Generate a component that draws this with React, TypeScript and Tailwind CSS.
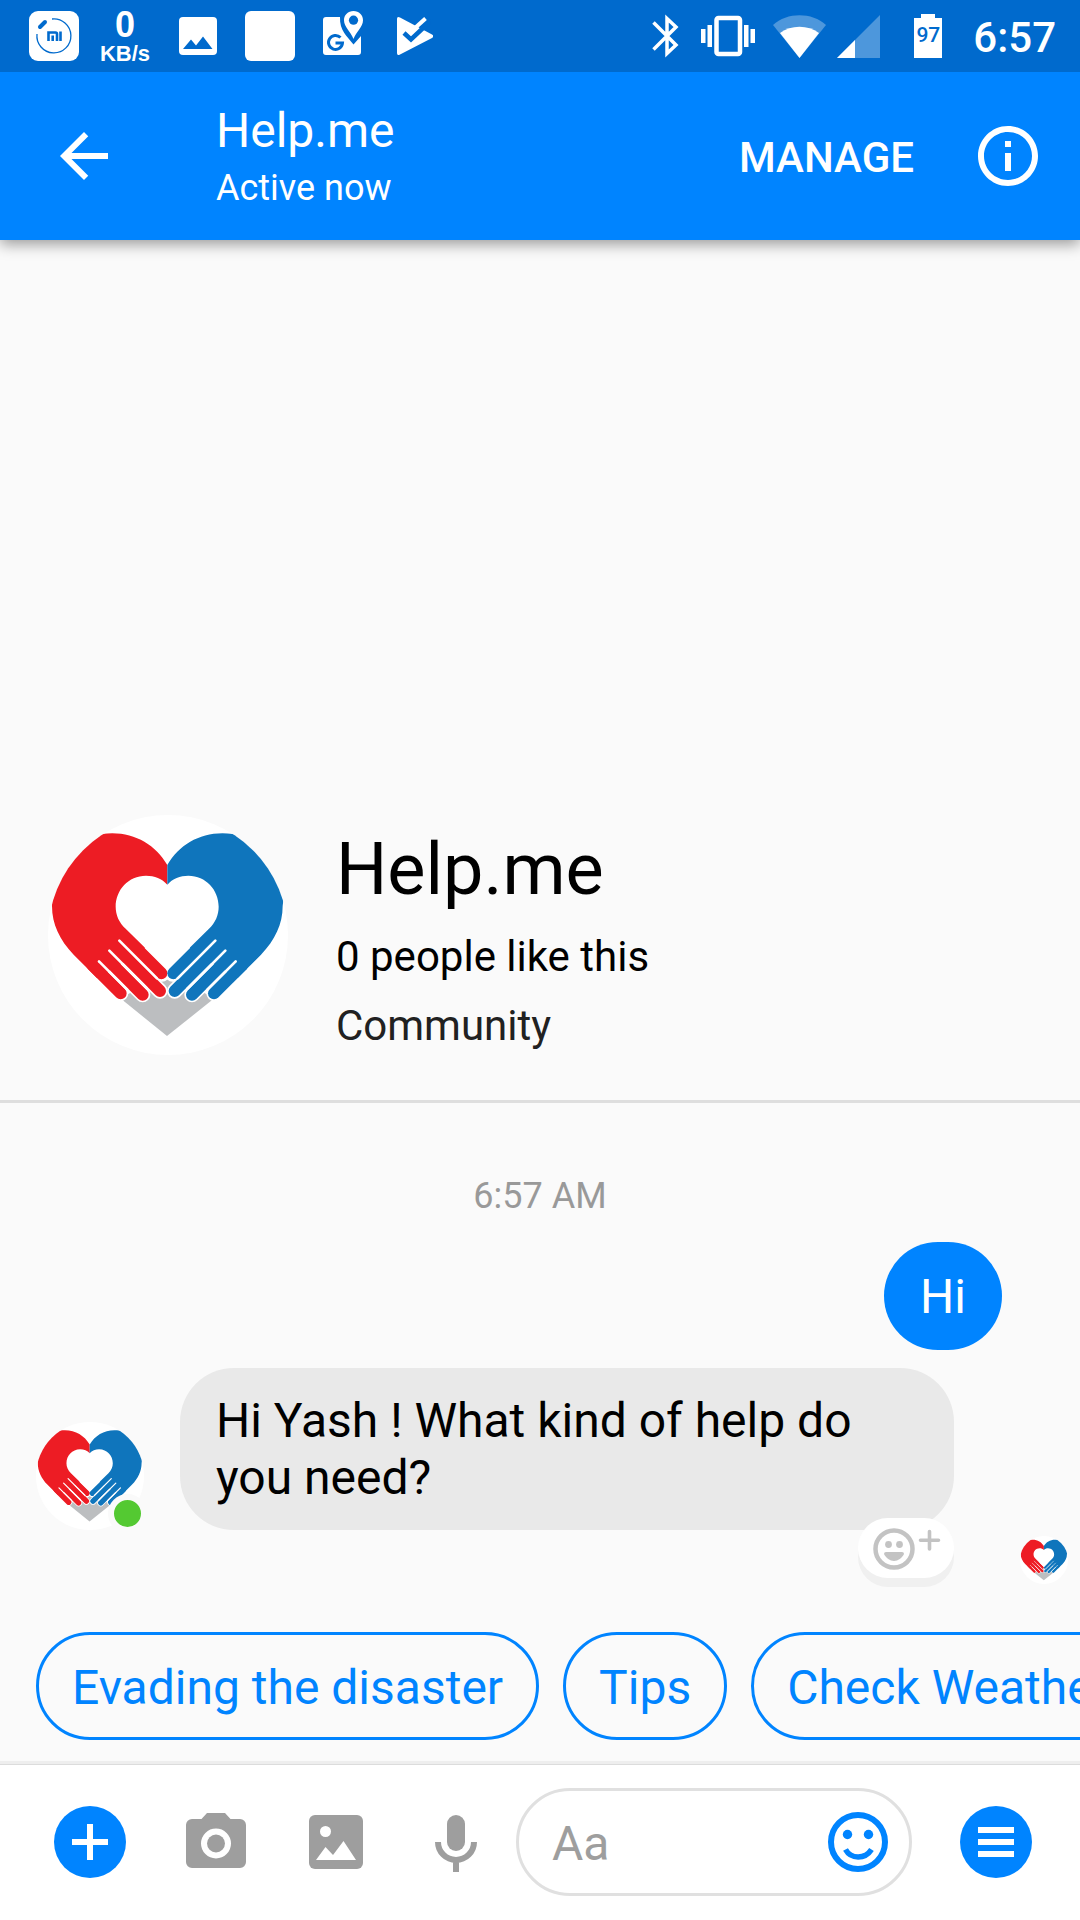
import type { ReactNode } from "react";

function HandOutline() {
  return (
    <g fill="none" stroke="#fff" strokeLinecap="round" strokeWidth="46">
      <path d="M186 495L271 580" />
      <path d="M254 501L337 584" />
      <path d="M290 474L389 573" />
      <path d="M300 427L395 522" />
    </g>
  );
}

function Hand() {
  return (
    <g fill="none" strokeLinecap="round">
      <g stroke="currentColor" strokeWidth="36">
        <path d="M186 495L271 580" />
        <path d="M254 501L337 584" />
        <path d="M290 474L389 573" />
        <path d="M300 427L393 520" />
      </g>
      <path
        fill="currentColor"
        d="M411 195C372 128 300 90 215 102L40 102L65 318C65 372 88 420 130 464L200 534L260 500L340 450L411 300Z"
      />
      <g stroke="#fff" strokeWidth="8">
        <path d="M206 484L290 568" />
        <path d="M237 452L350 565" />
        <path d="M267 422L380 535" />
      </g>
    </g>
  );
}

const mirror = "translate(822 0) scale(-1 1)";

function Logo() {
  return (
    <svg viewBox="53 45 720 720" className="block size-full" aria-hidden="true">
      <path d="M270 595L410 708L552 595L430 530L390 530Z" fill="#bcbec0" />
      <HandOutline />
      <g transform={mirror}>
        <HandOutline />
      </g>
      <g className="text-[#ed1c24]">
        <Hand />
      </g>
      <g className="text-[#0f75bc]" transform={mirror}>
        <Hand />
      </g>
      <path
        d="M411 254C396 236 372 227 347 227C294 227 256 270 256 320C256 345 266 368 286 386L411 509L536 386C555 368 565 345 565 320C565 270 527 227 474 227C450 227 426 236 411 254Z"
        fill="#fff"
      />
    </svg>
  );
}

function StatusBar() {
  return (
    <div className="relative z-10 flex h-[72px] items-center bg-[#006acd] pr-6 pl-[29px] text-white">
      <svg width="50" height="50" viewBox="0 0 50 50" aria-hidden="true">
        <rect width="50" height="50" rx="9" fill="#fff" />
        <g fill="none" stroke="#006acd">
          <path d="M23 8A17 17 0 1 1 8 23" strokeWidth="1.3" />
          <path d="M11 16L16 11" strokeWidth="4" strokeLinecap="round" />
          <path d="M19.500 30V21.500H26.500Q28 21.500 28 23V30M23.700 24.500V30M31.500 20.500V30" strokeWidth="2.600" />
        </g>
      </svg>
      <div className="ml-[18px] flex w-14 flex-col items-center font-['Liberation_Sans',sans-serif] font-bold">
        <span className="text-[36px] leading-[36px]">0</span>
        <span className="text-[22px] leading-[22px]">KB/s</span>
      </div>
      <svg className="ml-[26px]" width="38" height="38" viewBox="0 0 38 38" aria-hidden="true">
        <rect width="38" height="38" rx="4" fill="#fff" />
        <path d="M4 32L12 22.500L17 28.500L24 19.500L33.500 32Z" fill="#006acd" />
      </svg>
      <div className="ml-7 size-[50px] rounded-[6px] bg-white" />
      <svg className="ml-7" width="40" height="50" viewBox="0 0 40 50" aria-hidden="true">
        <path d="M4 6H17C16.500 20 24 25 30.500 33.500L38 25V41a3 3 0 0 1-3 3H3a3 3 0 0 1-3-3V9a3 3 0 0 1 3-3Z" fill="#fff" />
        <path d="M30.500 0C25 0 21 4 21 9.200C21 16 28 21 30.500 28C33 21 40 16 40 9.200C40 4 36 0 30.500 0Z" fill="#fff" />
        <circle cx="30.500" cy="9.200" r="4.600" fill="#006acd" />
        <path d="M17.500 26.500A7 7 0 1 0 19.500 32H12.500" fill="none" stroke="#006acd" strokeWidth="3" />
      </svg>
      <svg className="ml-[34px]" width="36" height="38" viewBox="0 0 36 38" aria-hidden="true">
        <path d="M0 2Q0-1 3 .500L35 17.500Q37.500 19 35 21L3 37.500Q0 39 0 36Z" fill="#fff" />
        <path d="M19 9L29 0L36 3L27 12Z" fill="#006acd" />
        <path d="M7 16L14 22.500L33 4.500" fill="none" stroke="#006acd" strokeWidth="4.500" />
        <path d="M13 15.500L28.500 1.500" stroke="#fff" strokeWidth="4" />
      </svg>

      <svg className="ml-auto" width="27" height="44" viewBox="0 0 27 44" fill="none" stroke="#fff" strokeWidth="3.500" aria-hidden="true">
        <path d="M1.500 8.500L24 31L15 39.500V4.500L24 13L1.500 35.500" />
      </svg>
      <svg className="ml-[22px]" width="54" height="42" viewBox="0 0 54 42" fill="#fff" aria-hidden="true">
        <rect x="15.500" y="3" width="23.500" height="36" rx="2" fill="none" stroke="#fff" strokeWidth="4.500" />
        <path d="M0 14H4.500V28H0ZM6.500 10H11V32H6.500ZM43 10H47.500V32H43ZM49.500 14H54V28H49.500Z" />
      </svg>
      <svg className="ml-[18px]" width="53" height="43" viewBox="0 0 53 43" fill="#fff" aria-hidden="true">
        <path d="M26.500 43L0 10C14-3 39-3 53 10Z" opacity=".3" />
        <path d="M26.500 43L7 18C18 9.500 35 9.500 46 18Z" />
      </svg>
      <svg className="ml-[11px]" width="43" height="43" viewBox="0 0 43 43" fill="#fff" aria-hidden="true">
        <path d="M0 43L43 0V43Z" opacity=".3" />
        <path d="M0 43L18 25V43Z" />
      </svg>
      <div className="relative ml-[34px] h-[44px] w-7">
        <svg className="block" width="28" height="44" viewBox="0 0 28 44" fill="#fff" aria-hidden="true">
          <path d="M7 0H21V4H28V44H0V4H7Z" />
        </svg>
        <span className="absolute inset-0 flex items-center justify-center text-[21px] font-medium text-[#006acd]">97</span>
      </div>
      <span className="ml-[31px] pt-[3px] text-[42px] leading-[48px] font-medium">6:57</span>
    </div>
  );
}

function Header() {
  return (
    <header className="relative flex h-[168px] items-center bg-[#0084ff] pr-9 pl-12 text-white shadow-[0_4px_14px_rgba(0,0,0,0.4)]">
      <button type="button" aria-label="Back">
        <svg className="block size-[72px]" viewBox="0 0 24 24" fill="currentColor" aria-hidden="true">
          <path d="M20 11H7.830l5.590-5.590L12 4l-8 8 8 8 1.410-1.410L7.830 13H20v-2z" />
        </svg>
      </button>
      <div className="ml-24 flex-1 pt-1">
        <h1 className="text-[48px] leading-[60px]">Help.me</h1>
        <p className="text-[36px] leading-[54px]">Active now</p>
      </div>
      <button type="button" className="pt-[3px] text-[42px] leading-[48px] font-medium">
        MANAGE
      </button>
      <button type="button" aria-label="Conversation info" className="ml-[58px]">
        <svg className="block size-[72px]" viewBox="0 0 24 24" fill="currentColor" aria-hidden="true">
          <path d="M11 7h2v2h-2zm0 4h2v6h-2zm1-9C6.480 2 2 6.480 2 12s4.480 10 10 10 10-4.480 10-10S17.520 2 12 2zm0 18c-4.410 0-8-3.590-8-8s3.590-8 8-8 8 3.590 8 8-3.590 8-8 8z" />
        </svg>
      </button>
    </header>
  );
}

function Avatar({ className }: { className: string }) {
  return (
    <div className={`shrink-0 overflow-hidden rounded-full bg-white ${className}`}>
      <Logo />
    </div>
  );
}

function Profile() {
  return (
    <section className="flex items-start border-b-[3px] border-[#dedede] pb-10 pl-12">
      <Avatar className="size-60" />
      <div className="ml-12 pt-3">
        <h2 className="text-[72px] leading-[86px] text-black">Help.me</h2>
        <p className="mt-[9px] text-[42px] leading-[69px] text-black">0 people like this</p>
        <p className="text-[42px] leading-[69px] text-[#212121]">Community</p>
      </div>
    </section>
  );
}

function Messages() {
  return (
    <section className="pt-[69px]">
      <p className="text-center text-[36px] leading-[48px] text-[#999]">6:57 AM</p>
      <div className="mt-[22px] flex justify-end pr-[78px]">
        <p className="flex min-h-[108px] items-center rounded-[54px] bg-[#0084ff] px-9 text-[48px] leading-[57px] text-white">Hi</p>
      </div>
      <div className="mt-[18px] flex items-end pr-[126px] pl-9">
        <div className="relative">
          <Avatar className="size-[108px]" />
          <span className="absolute -right-[3px] -bottom-[3px] size-[39px] rounded-full border-[6px] border-[#fafafa] bg-[#54c932]" />
        </div>
        <div className="relative ml-9 flex-1">
          <p className="rounded-[54px] bg-[#e9e9e9] px-9 py-6 text-[48px] leading-[57px] text-black">
            Hi Yash ! What kind of help do you need?
          </p>
          <button
            type="button"
            aria-label="Add reaction"
            className="absolute right-0 -bottom-12 flex h-[60px] w-24 items-center justify-center rounded-full bg-white pt-[2px] pl-[2px] shadow-[0_9px_0_#f0f0f0]"
          >
            <svg width="68" height="42" viewBox="0 0 68 42" fill="#c3c3c3" aria-hidden="true">
              <circle cx="21" cy="21" r="18.500" fill="none" stroke="#c3c3c3" strokeWidth="4.500" />
              <circle cx="15.500" cy="16.500" r="3.400" />
              <circle cx="26.500" cy="16.500" r="3.400" />
              <path d="M13 24H29Q31 24 31 26C29 30 25 33 21 33S13 30 11 26Q11 24 13 24Z" />
              <path d="M56.500 3.500V21M47.500 12.300H65.500" stroke="#c3c3c3" strokeWidth="3.600" strokeLinecap="round" />
            </svg>
          </button>
        </div>
      </div>
      <div className="mt-[6px] flex justify-end pr-3">
        <Avatar className="size-12" />
      </div>
    </section>
  );
}

const replies = ["Evading the disaster", "Tips", "Check Weather"];

function QuickReplies() {
  return (
    <div className="mt-12 flex gap-6 overflow-x-auto pb-[21px] pl-9 [scrollbar-width:none]">
      {replies.map((label) => (
        <button
          key={label}
          type="button"
          className="h-[108px] shrink-0 rounded-full border-[3px] border-[#0084ff] px-[33px] pt-[2px] text-[48px] leading-[57px] whitespace-nowrap text-[#0084ff]"
        >
          {label}
        </button>
      ))}
    </div>
  );
}

function ToolButton({ label, className, children }: { label: string; className: string; children: ReactNode }) {
  return (
    <button type="button" aria-label={label} className={`shrink-0 ${className}`}>
      <svg className="block size-[72px]" viewBox="0 0 72 72" fill="currentColor" aria-hidden="true">
        {children}
      </svg>
    </button>
  );
}

function Composer() {
  return (
    <footer className="border-t-[3px] border-[#eee] bg-white">
      <form
        className="flex items-center border-t border-[#dcdcdc] pt-[23px] pr-12 pb-6 pl-[54px]"
        onSubmit={(event) => event.preventDefault()}
      >
        <ToolButton label="More actions" className="text-[#0084ff]">
          <circle cx="36" cy="36" r="36" />
          <path d="M36 18V54M18 36H54" stroke="#fff" strokeWidth="6" />
        </ToolButton>
        <ToolButton label="Camera" className="ml-[54px] text-[#9e9e9e]">
          <path
            fillRule="evenodd"
            d="M27 7H45L50.500 13H60a6 6 0 0 1 6 6V56a6 6 0 0 1-6 6H12a6 6 0 0 1-6-6V19a6 6 0 0 1 6-6H21.500ZM36 22.500a15 15 0 1 0 0 30a15 15 0 1 0 0-30Z"
          />
          <circle cx="36" cy="37.500" r="9" />
        </ToolButton>
        <ToolButton label="Gallery" className="ml-12 text-[#9e9e9e]">
          <rect x="9" y="9" width="54" height="54" rx="6" />
          <circle cx="25.500" cy="25.500" r="5.500" fill="#fff" />
          <path d="M16 54L25.500 41L33 49L43.500 35L56 54Z" fill="#fff" />
        </ToolButton>
        <ToolButton label="Record voice" className="ml-12 text-[#9e9e9e]">
          <rect x="27" y="9" width="18" height="36" rx="9" />
          <path d="M18 36A18 18 0 0 0 54 36M36 54V66" fill="none" stroke="currentColor" strokeWidth="6" />
        </ToolButton>
        <div className="ml-6 flex h-[108px] min-w-0 flex-1 items-center rounded-full border-[3px] border-[#e0e0e0] pr-[15px] pl-[33px]">
          <input
            type="text"
            aria-label="Message"
            placeholder="Aa"
            className="min-w-0 flex-1 bg-transparent pt-[2px] text-[48px] leading-[57px] text-black outline-none placeholder:text-[#9e9e9e]"
          />
          <ToolButton label="Emoji" className="text-[#0084ff]">
            <circle cx="36" cy="36" r="27" fill="none" stroke="currentColor" strokeWidth="6" />
            <circle cx="25.500" cy="28.500" r="4.700" />
            <circle cx="46.500" cy="28.500" r="4.700" />
            <path d="M23.500 43.500C29 53.500 43 53.500 49.500 43.500" fill="none" stroke="currentColor" strokeWidth="5.500" />
          </ToolButton>
        </div>
        <ToolButton label="Menu" className="ml-12 text-[#0084ff]">
          <circle cx="36" cy="36" r="36" />
          <path d="M18 24H54M18 36H54M18 48H54" stroke="#fff" strokeWidth="6" />
        </ToolButton>
      </form>
    </footer>
  );
}

export default function App() {
  return (
    <div className="flex min-h-screen flex-col bg-[#fafafa] font-[Roboto,sans-serif]">
      <StatusBar />
      <Header />
      <main className="flex min-w-0 flex-1 flex-col justify-end">
        <Profile />
        <Messages />
        <QuickReplies />
      </main>
      <Composer />
    </div>
  );
}
